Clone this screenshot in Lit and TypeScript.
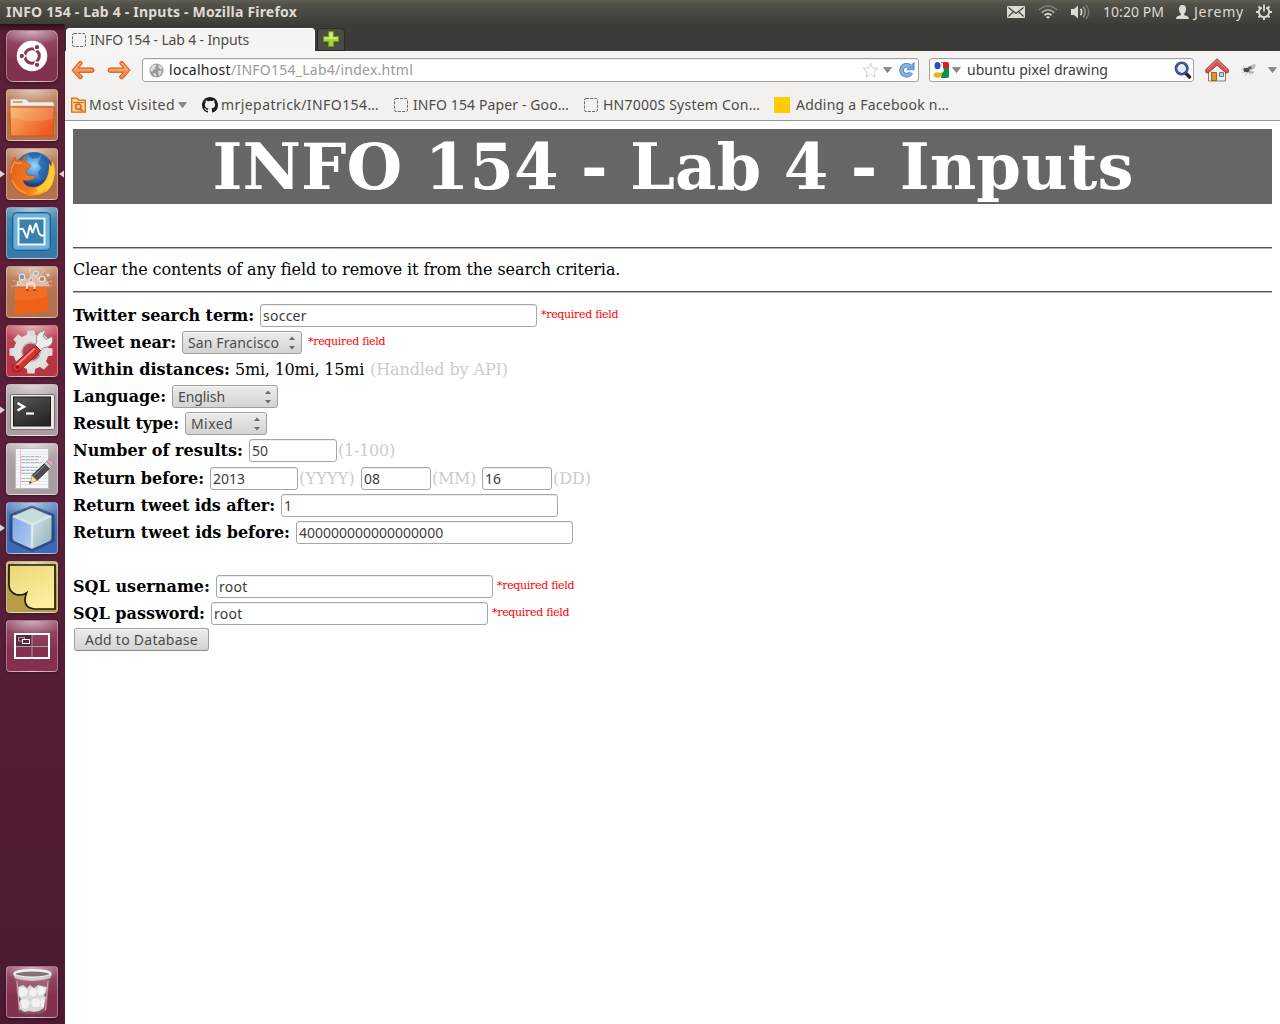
import { LitElement, html, svg, css, nothing } from "lit";
import { customElement } from "lit/decorators.js";

/* A run of text tracked so that it fills the given width in pixels. */
const fit = (text: string, width: number, cls = "") =>
  html`<span class="fit ${cls}" data-w=${width}>${text}</span>`;

const dashed = html`<svg class="ic" width="15" height="15" viewBox="0 0 15 15">
  <rect x=".5" y=".5" width="13" height="13" rx="1.500" fill="none" stroke="#6b6b69" stroke-dasharray="3 1.200"/></svg>`;

const caret = html`<svg class="ic" width="9" height="6" viewBox="0 0 9 6"><path d="M.5.5h8L4.500 5.700z" fill="#8b8a87" stroke="#71706d" stroke-width=".6"/></svg>`;

/* Launcher artwork, each drawn on a 52x52 tile. */
const art: Record<string, unknown> = {
  dash: svg`<circle cx="26" cy="26" r="15.300" fill="#fff"/>
    <circle cx="26" cy="26" r="7.300" fill="none" stroke="#8a3656" stroke-width="3"/>
    <g stroke="#fff" stroke-width="1.400"><path d="M29 20.800l4-6.500M29 31.200l4 6.500M20 26h-8"/></g>
    <g fill="#8a3656" stroke="#fff" stroke-width="1.100"><circle cx="31" cy="17.200" r="2.700"/><circle cx="31" cy="34.800" r="2.700"/><circle cx="15.800" cy="26" r="2.700"/></g>`,
  files: svg`<path d="M4.500 11.500q0-1.500 1.500-1.500h13.500l3.500 3h23q2 0 2 2V45h-43.500z" fill="#f1efee" stroke="#b9a79c" stroke-width=".8"/>
    <path d="M7 12h9.500v2H7z" fill="#f09664"/><path d="M6 16.500h41v2H6z" fill="#c9b5a9"/>
    <path d="M3.700 18h44.600l-1 27.500q0 1.500-1.500 1.500h-39.600q-1.500 0-1.500-1.500z" fill="url(#g-folder)" stroke="#c65422"/>
    <path d="M4.500 19h43l-.5 11Q22 35 5 28z" fill="#fff" opacity=".13"/>`,
  firefox: svg`<circle cx="28" cy="23.500" r="19.500" fill="url(#g-globe)"/>
    <path d="M22 6q8-3 13 0l-3 4-6 1zM36 7l7 6v7l-4 8-5 2-2-6 3-4-3-5 2-4z" fill="#1d5298" opacity=".6"/>
    <path d="M20 7Q17 9 16.500 12.500 13 11.500 11 12.500 9 11 9 9 4 18 3.500 27 5 45 24 48.500 43 48 47.500 33 50 23 46 12q0 5-1 7l-2-4q1 11-4 18-6 7-14 6-7-1-8-7 5 2 10-1 3-2 1-3.500-5 1-7-1-2-3 0-5.500 4-1 4-4-5-1-6-3.500 0-4 1-6.500z" fill="url(#g-fox)" stroke="#c2480f" stroke-width=".5"/>
    <path d="M46 12q0 5-1 7l-2-4q1 11-4 18-3 5-9 7l2 3-5 3q9-1 14-6l-1 4q8-7 8-17l1 2q1-10-3-17z" fill="#fdcf35" opacity=".8"/>
    <path d="M5 25q0-6 4-11 2 2 7 1M6 32q4 10 14 13" fill="none" stroke="#fbb366" stroke-width="1.500" opacity=".6"/>`,
  monitor: svg`<rect x="6.500" y="5.500" width="38" height="38" rx="4" fill="#4a94c4" stroke="#235f8a"/>
    <rect x="8" y="7" width="35" height="35" rx="3" fill="#6eb2dc"/>
    <rect x="12.500" y="11.500" width="26" height="26" fill="#3c81ad" stroke="#eaf6fc" stroke-width="2"/>
    <path d="M13.500 22h3.500l4 9 3-13 2.500 8 3.500-10 3 10.500 2 2h3" fill="none" stroke="#fff" stroke-width="1.900" stroke-linejoin="bevel"/>`,
  store: svg`<g stroke="#fff" stroke-width=".9" opacity=".4"><path d="M25 21L6 14M25 21L11 6M25 21L24 3M25 21L38 5M25 21L46 15M23 20L5 20M28 20L46 20"/></g>
    <path d="M9 20L15 11l7 2 4-6 6 4 7 0 5 9z" fill="#fbdccb" opacity=".6"/>
    <g stroke="#e6e0dc" stroke-width="1.200"><circle cx="16" cy="11" r="2.800" fill="#6f97bd"/><circle cx="30" cy="7.500" r="2.500" fill="#aab0b0"/><circle cx="36" cy="13" r="2.700" fill="#b67f58"/><circle cx="25" cy="14" r="2" fill="#8aa0b0"/><circle cx="13" cy="17" r="1.500" fill="#98b464"/><circle cx="42" cy="9" r="1" fill="#ddd"/></g>
    <path d="M9 22l32-1 1.500 24L9 48.500z" fill="#f0611a"/><path d="M9 22l32-1 .5 9Q24 36 9 34z" fill="#f98638" opacity=".35"/>
    <path d="M21 23v-4q0-1.500 1.500-1.500h4.500q1.500 0 1.500 1.500v4" fill="none" stroke="#fbe2d4" stroke-width="1.800"/>
    <path d="M20 24h3M27 24h3" stroke="#c1440b" stroke-width="1.800"/>`,
  settings: svg`<g transform="translate(25 27)">${[0, 45, 90, 135, 180, 225, 270, 315].map(
      (a) => svg`<path transform="rotate(${a})" d="M-4.500-15l1-6.500h7l1 6.500z" fill="#dddcda"/>`)}
      <circle r="13.500" fill="none" stroke="#e2e1df" stroke-width="8"/><circle r="9" fill="none" stroke="#b5b2b0" stroke-width="1.500"/><circle r="8.300" fill="#b04650"/></g>
    <path d="M31 17q-2-6 3-10l6-2-3 6 3 3.500 6-3q2 6-2.500 9.500-3.500 2-6 1.500L33 28l-6-5z" fill="#efeeec" stroke="#8b8a88" stroke-width=".9"/>
    <path d="M29.500 20.500l5 5L14 45.500q-3.500 2.500-6.500 0-2.500-3 0-6z" fill="#d73032" stroke="#8f161b"/>
    <path d="M28 24L11 40" stroke="#f28b85" stroke-width="1.800" stroke-linecap="round"/><circle cx="11.500" cy="42" r="1.700" fill="#8d1115"/>`,
  terminal: svg`<rect x="4.500" y="10.500" width="44" height="35" rx="1.500" fill="#eceae9" stroke="#77716f"/>
    <rect x="7.500" y="13" width="37" height="29" fill="url(#g-term)" stroke="#1a1a1a"/>
    <path d="M11.500 19l6.500 3.700-6.500 3.800" fill="none" stroke="#fff" stroke-width="2.400"/><path d="M20 29.500h8" stroke="#fff" stroke-width="2.200"/>`,
  editor: svg`<path d="M9.500 5.500h33v40h-33z" fill="#f6f7f8" stroke="#c0bbb8"/>
    <path d="M10 8.500h32M10 11.500h32M10 14.500h32M10 17.500h32M10 20.500h32M10 23.500h32M10 26.500h32M10 29.500h32M10 32.500h32M10 35.500h32M10 38.500h32M10 41.500h32" stroke="#dbe5f0" stroke-width=".8"/>
    <path d="M14.500 6v39" stroke="#f3bcbc"/>
    <path d="M15 13.500h20M15 16.500h17M15 19.500h21M15 24.500h17M15 27.500h19M15 30.500h14M15 35.500h13M15 38.500h11" stroke="#b4b4b4" stroke-dasharray="4 .7"/>
    <path d="M38.500 20.500l5 5L31 37.500l-5-5z" fill="#4c4c4c" stroke="#222" stroke-width=".8"/><path d="M39 22L27.500 33.200" stroke="#929292"/>
    <path d="M26 32.500l5 5-6.500 2.500z" fill="#f2df8a" stroke="#a48f45" stroke-width=".6"/><path d="M24 38l1.500 2-2.500.8z" fill="#111"/>
    <path d="M38.500 20.500l2-2 5 5-2 2z" fill="#cfcfcf" stroke="#777" stroke-width=".5"/><path d="M40.500 18.500q2-2.500 4.500-1.500 3.500 1.500 2.500 4.500l-2 2z" fill="#e7a3c5" stroke="#a8638a" stroke-width=".6"/>`,
  cube: svg`<path d="M26 6L46 14v24L26 47 6 38V14z" fill="#24406f" stroke="#1f3766" stroke-width="5" stroke-linejoin="round" opacity=".6"/>
    <path d="M26 6L45 14 26 22.500 7 14z" fill="#c6dcda"/><path d="M6.500 14L26 22.500V47L8 39q-1.500-1-1.500-3z" fill="url(#g-cubeL)"/><path d="M45.500 14L26 22.500V47l18-8q1.500-1 1.500-3z" fill="url(#g-cube)"/>
    <path d="M7 14L26 22.500 45 14M26 22.500v23" fill="none" stroke="#eaf5f8" stroke-width="2.400" opacity=".7"/>`,
  note: svg`<path d="M3 4h46v44H28q-9-3-9-9.500 0-3 1-5.500H12q-7-1-9-7z" fill="url(#g-note)"/>
    <path d="M3 4h46v44H28q-9-1-9-9 0-3 1.500-7Q16 35 10 33.500 3 31 3 24z" fill="none" stroke="#1b1a12" stroke-width="1.700"/>`,
  spaces: svg`<path d="M9 14h17v12H9z" fill="#5d2741"/><path d="M26 14v24M9 26.500h34" stroke="#9aa59e"/>
    <rect x="9" y="14" width="34" height="24" fill="none" stroke="#fff" stroke-width="2"/>
    <rect x="12.500" y="17.500" width="6" height="3.500" fill="none" stroke="#9aa59e"/><rect x="16.500" y="19.500" width="7" height="4" fill="#5d2741" stroke="#fff"/>`,
  trash: svg`<path d="M9 9h35l-3.500 36q-14 5-28 0z" fill="#c8a9b6" opacity=".3"/>
    <path d="M12 21l5-2 4 3 3-3 4 3 4-3 4 1 5 1-1 5-2 3 2 3-2 4v6l-5 3-5 1-5-1-5 1-4-3-1-6 2-4-3-4 1-4z" fill="#dbd8d8"/>
    <g fill="#f3f2f2"><path d="M13 22l5-1 4 4-2 5-5 1-3-5zM25 22l5 1 1 5-4 3-4-3zM33 20l6 2-1 6-5 2-2-5zM15 34l6-1 3 4-3 6-5-1zM27 33l5-1 3 4-2 5-6 0-2-4zM35 32l4 2-1 7-3 0z"/></g>
    <ellipse cx="26.500" cy="8" rx="18" ry="3.800" fill="#82727a" stroke="#f0efee" stroke-width="2.400"/>
    <path d="M8.500 9v3q18 6 36 0V9q-18 6-36 0z" fill="#cfcccc"/><path d="M11 15l2.500 29M42 15l-2.500 29" stroke="#ddc8d0" opacity=".7"/>
    <path d="M12 44q14 5.500 28 0v2q-14 5-28 0z" fill="#6e5d65"/>`,
};

const apps: { id: string; left?: boolean; right?: boolean }[] = [
  { id: "dash" }, { id: "files" }, { id: "firefox", left: true, right: true }, { id: "monitor" },
  { id: "store" }, { id: "settings" }, { id: "terminal", left: true }, { id: "editor" },
  { id: "cube", left: true }, { id: "note" }, { id: "spaces" }, { id: "trash" },
];

@customElement("app-root")
export class AppRoot extends LitElement {
  static styles = css`
    :host { display: block; width: 1280px; height: 1024px; overflow: hidden; background: #fff; }
    * { box-sizing: border-box; }
    svg { display: block; flex: none; }
    .screen { display: flex; flex-direction: column; width: 1280px; height: 1024px; font: 14px/20px "Noto Sans", sans-serif; color: #4c4c4c; }
    .fit { display: inline-block; white-space: pre; flex: none; }
    .panel { display: flex; align-items: center; height: 24px; flex: none; padding: 0 8px 0 6px; background: linear-gradient(#605f54 0, #504f48 5px, #3f3e39 23px, #3c3b37); color: #dfdbd2; }
    .title { font-weight: 700; margin-right: auto; }
    .env { margin-right: 13px; } .wifi { margin-right: 12px; } .vol { margin-right: 13px; } .clock { margin-right: 12px; } .user { margin-right: 5px; } .name { margin-right: 12px; }
    .work { display: flex; flex: 1; min-height: 0; }
    .launcher { width: 65px; flex: none; display: flex; flex-direction: column; gap: 7px; padding: 6px 0; background: linear-gradient(#2e0f1c 0, #5a1e36 8px, #5b2039 45%, #4b1a30); border-right: 1px solid #4a1b30; }
    .slot { display: flex; align-items: center; height: 52px; flex: none; }
    .slot:last-child { margin-top: auto; }
    .gap { width: 6px; }
    .tile { width: 52px; height: 52px; border-radius: 4px; border: 1px solid rgba(255,255,255,.33); box-shadow: 0 1px 3px rgba(0,0,0,.35); background-image: radial-gradient(ellipse 32px 15px at 50% 0, rgba(255,255,255,.55), transparent), linear-gradient(rgba(255,255,255,.16), transparent 60%); }
    .tile svg { margin: -1px; }
    .tile.dash { border-radius: 7px; }
    .dash, .spaces, .trash { background-color: #84304f; }
    .files, .store, .firefox { background-color: #b4714c; }
    .monitor { background-color: #3779a8; } .settings { background-color: #b83544; }
    .terminal, .editor { background-color: #a99da1; }
    .cube { background-color: #3f6ab1; } .note { background-color: #b69d46; }
    .browser { flex: 1; display: flex; flex-direction: column; min-width: 0; }
    .tabs { height: 27px; display: flex; align-items: flex-end; gap: 2px; padding-left: 1px; background: #3c3b37; flex: none; }
    .tab { width: 249px; height: 23px; border-radius: 4px 4px 0 0; background: #f5f4f2; border: 1px solid #fff; border-bottom: 0; display: flex; align-items: center; gap: 3px; padding-left: 5px; }
    .plus { width: 28px; height: 23px; border-radius: 4px 4px 0 0; border: 1px solid #2c2b28; background: #4b4a45; display: flex; align-items: center; justify-content: center; padding-bottom: 2px; }
    .nav { height: 39px; display: flex; align-items: center; background: linear-gradient(#f6f5f4, #f2f1f0 34px); padding: 0 0 1px 6px; flex: none; }
    .back { margin-right: 12px; } .fwd { margin-right: 11px; }
    .field { height: 24px; border: 1px solid #a3a19e; border-radius: 3px; background: #fff; display: flex; align-items: center; box-shadow: inset 0 1px #eeedec; }
    .url { width: 777px; padding: 0 3px 0 6px; margin-right: 10px; }
    .url .globe { margin-right: 5px; } .host { color: #222; } .path { color: #9b9a98; margin-right: auto; }
    .star { margin-right: 4px; } .reload { margin-left: 6px; }
    .search { width: 265px; padding: 0 1px 0 3px; margin-right: 11px; color: #3c3c3c; }
    .search .fit { margin: 0 auto 0 6px; } .search .goog { margin-right: 3px; }
    .home { margin-right: 12px; } .fly { margin-right: 11px; }
    .marks { height: 31px; display: flex; align-items: center; background: #f2f1f0; border-bottom: 1px solid #979694; padding-left: 6px; flex: none; }
    .mark { display: flex; align-items: center; margin-right: 15px; }
    .m1 .fit { margin: 0 3px; } .m2 .fit { margin-left: 3px; } .m3 .fit { margin-left: 4px; } .m4 .fit { margin-left: 4px; } .m5 .fit { margin-left: 6px; }
    .m4 { margin-right: 14px; }
    .yellow { width: 16px; height: 16px; background: #ffcb05; }
    .page { flex: 1; background: #fff; padding: 8px; color: #000; font: 16px/19px "DejaVu Serif", serif; }
    .banner { height: 75px; background: #666; color: #fff; text-align: center; margin: 0 0 43px; font-size: 64px; line-height: 75px; font-weight: 700; padding-left: 1px; }
    .rule { height: 2px; border-top: 1px solid #545452; border-bottom: 1px solid #b5b4b2; }
    .hint { height: 42px; line-height: 41px; }
    .form { padding-top: 9px; }
    .row { height: 27px; padding-top: 2px; display: flex; line-height: 23px; }
    .tall { height: 28px; }
    .label { font-weight: 700; margin-right: 6px; }
    .grey { color: #ccc; margin-left: 1px; }
    .near { margin-left: -1px; }
    .date { margin-right: 6px; }
    .req { color: #f00; font-size: 11px; line-height: 22px; margin-left: 4px; }
    .after { margin-left: 6px; }
    .input { height: 23px; border: 1px solid #a9a7a3; border-radius: 3px; background: #fff; padding: 0 2px; margin: 0; outline: 0; font: 14px/21px "Noto Sans", sans-serif; color: #3c3c3c; box-shadow: inset 0 1px #eeedeb; }
    .word { letter-spacing: .25px; }
    .long { width: 277px; } .mid { width: 88px; } .short { width: 70px; }
    .select, .submit { height: 23px; border: 1px solid #a09f9c; border-radius: 3px; background: linear-gradient(#ececec, #d3d3d2); font: 14px/21px "Noto Sans", sans-serif; color: #4c4c4c; display: flex; justify-content: space-between; box-shadow: inset 0 1px #f7f7f7; }
    .select { padding: 0 5px; align-items: center; }
    .submit { width: 135px; margin: -1px 0 0 1px; padding: 0; justify-content: center; border-bottom-color: #8b8a87; }
    .city { width: 120px; } .lang { width: 106px; } .kind { width: 82px; }
  `;

  firstUpdated() {
    this.renderRoot.querySelectorAll<HTMLElement>(".fit").forEach((el) => {
      const target = Number(el.dataset.w);
      const count = el.textContent!.length;
      el.style.letterSpacing = `${(target - el.getBoundingClientRect().width) / count}px`;
      el.style.width = `${target}px`;
    });
  }

  private tile(a: { id: string; left?: boolean; right?: boolean }) {
    return html`<div class="slot">
      <svg class="gap" width="6" height="12" viewBox="0 0 6 12">${a.left ? svg`<path d="M0 2.500l5 3.500-5 3.500z" fill="#dcd3d6"/>` : nothing}</svg>
      <div class="tile ${a.id}"><svg width="52" height="52" viewBox="0 0 52 52">
        <defs>
          <linearGradient id="g-folder" x2="1" y2=".6"><stop stop-color="#f8b565"/><stop offset="1" stop-color="#ee5a24"/></linearGradient>
          <radialGradient id="g-globe" cy=".35"><stop stop-color="#9ad8f6"/><stop offset=".6" stop-color="#3e86c8"/><stop offset="1" stop-color="#183f83"/></radialGradient>
          <linearGradient id="g-fox" x2="1" y2=".3"><stop stop-color="#e0601c"/><stop offset=".6" stop-color="#ef7a1e"/><stop offset="1" stop-color="#fcc32e"/></linearGradient>
          <linearGradient id="g-term" x2=".6" y2="1"><stop stop-color="#585854"/><stop offset="1" stop-color="#262624"/></linearGradient>
          <linearGradient id="g-cube" x2="1" y2="1"><stop stop-color="#d4e3ea"/><stop offset="1" stop-color="#8fb0b9"/></linearGradient>
          <linearGradient id="g-cubeL" x2="1" y2="1"><stop stop-color="#7ea4e4"/><stop offset="1" stop-color="#b4cff2"/></linearGradient>
          <linearGradient id="g-note" x2=".6" y2="1"><stop stop-color="#ebd775"/><stop offset="1" stop-color="#fbef9e"/></linearGradient>
        </defs>${art[a.id]}</svg></div>
      ${a.right ? html`<svg width="6" height="12" viewBox="0 0 6 12"><path d="M6 2.500L1 6l5 3.500z" fill="#dcd3d6"/></svg>` : nothing}
    </div>`;
  }

  private select(text: string, w: number, cls: string) {
    return html`<div class="select ${cls}">${fit(text, w)}
      <svg width="8" height="15" viewBox="0 0 8 15"><path d="M1 5L4 1.500 7 5zM1 11L4 14.500 7 11z" fill="#6b6b69"/></svg></div>`;
  }

  render() {
    return html`<div class="screen">
      <div class="panel">
        ${fit("INFO 154 - Lab 4 - Inputs - Mozilla Firefox", 291, "title")}
        <svg class="env" width="18" height="12" viewBox="0 0 18 12"><rect width="18" height="12" rx="1" fill="#dfdbd2"/><path d="M1.500 1.500L9 7.500l7.500-6M1.500 10.500l5-5M16.500 10.500l-5-5" fill="none" stroke="#44433e" stroke-width="1.200"/></svg>
        <svg class="wifi" width="20" height="14" viewBox="0 0 20 14" fill="none"><path d="M.8 5Q10-3 19.200 5" stroke="#85827a" stroke-width="1.600"/><path d="M3.700 7.600Q10 2.200 16.300 7.600" stroke="#b0ada5" stroke-width="1.700"/><path d="M6.600 10.200Q10 7.400 13.400 10.200" stroke="#dfdbd2" stroke-width="1.800"/><path d="M10 13.800L7.800 11.900q2.200-1.500 4.400 0z" fill="#dfdbd2"/></svg>
        <svg class="vol" width="20" height="16" viewBox="0 0 20 16" fill="none"><path d="M1 5h3l4-3.500v13L4 11H1z" fill="#dfdbd2"/><path d="M10.500 4.800q2.400 3.200 0 6.400" stroke="#dfdbd2" stroke-width="1.700"/><path d="M13.200 2.800q4 5.200 0 10.400" stroke="#99968d" stroke-width="1.500"/><path d="M16 1q5.500 7 0 14" stroke="#77746d" stroke-width="1.500"/></svg>
        ${fit("10:20 PM", 61, "clock")}
        <svg class="user" width="13" height="14" viewBox="0 0 13 14"><path d="M3 4q0-4 3.500-4T10 4q0 3.500-1.800 4.800v1.400Q13 11 13 14H0q0-3 4.800-3.800V8.800Q3 7.500 3 4z" fill="#dfdbd2"/></svg>
        ${fit("Jeremy", 50, "name")}
        <svg width="16" height="16" viewBox="0 0 16 16" fill="none" stroke="#dfdbd2"><path d="M5.800 3.300a5.200 5.200 0 1 0 4.400 0" stroke-width="2"/><path d="M8 .5v7" stroke-width="1.800"/><path d="M2.500 2.500l2 2M13.500 2.500l-2 2M0 8h3M13 8h3M2.500 13.500l2-2M13.500 13.500l-2-2M8 13v3" stroke-width="1.900"/></svg>
      </div>
      <div class="work">
        <div class="launcher">${apps.map((a) => this.tile(a))}</div>
        <div class="browser">
          <div class="tabs">
            <div class="tab">${dashed}${fit("INFO 154 - Lab 4 - Inputs", 159)}</div>
            <div class="plus"><svg width="16" height="16" viewBox="0 0 16 16"><path d="M5.500.5h5v5h5v5h-5v5h-5v-5h-5v-5h5z" fill="#a9d13a" stroke="#6b9a1c"/><path d="M6.500 1.500h3v5h5v1.500H1.500V6.500h5z" fill="#d5ec83"/></svg></div>
          </div>
          <div class="nav">
            <svg class="back" width="24" height="20" viewBox="0 0 24 20"><path d="M10.300 1.500q1.500 1 .5 2.800L7.500 8H21q2 0 2 2.200t-2 2.100H7.500l3.500 3.500q1 1.600-.5 2.700-1.200.9-2.500 0L1 10.200 8 2q1-1.200 2.300-.5z" fill="#f18d4c" stroke="#cf5420"/><path d="M9.500 3L3.500 9.800H21" fill="none" stroke="#f9b384"/></svg>
            <svg class="fwd" width="24" height="20" viewBox="0 0 24 20"><path d="M13.700 1.500q-1.500 1-.5 2.800L16.500 8H3q-2 0-2 2.200t2 2.100h13.500L13 15.800q-1 1.600.5 2.700 1.200.9 2.500 0l7-8.300L16 2q-1-1.200-2.300-.5z" fill="#f18d4c" stroke="#cf5420"/><path d="M14.500 3l6 6.800H3" fill="none" stroke="#f9b384"/></svg>
            <div class="field url">
              <svg class="globe" width="15" height="15" viewBox="0 0 15 15"><circle cx="7.500" cy="7.500" r="7" fill="#999"/><path d="M3 2.500l3-1 1.500 1L6 4.500l1 1.500-2.500.5L3 9 1 7.500zM9 1.500l3 1.500 1.500 3-2 .5L10 5zM9 8l3.500-.5L13 9l-2.500 4-1-2zM4 10l3 .5.500 3-2-.5z" fill="#dedede"/></svg>
              ${fit("localhost", 62, "host")}${fit("/INFO154_Lab4/index.html", 182, "path")}
              <svg class="star" width="17" height="16" viewBox="0 0 17 16"><path d="M8.500 1l2.100 5 5.400.3-4.200 3.500 1.400 5.400-4.700-3-4.700 3 1.400-5.400L1 6.300 6.400 6z" fill="#fff" stroke="#cfcecc"/></svg>
              ${caret}
              <svg class="reload" width="17" height="16" viewBox="0 0 17 16"><path d="M11.500 4.200A5 5 0 1 0 13 10.500" fill="none" stroke="#4a82bb" stroke-width="4.600"/><path d="M16 .5v7.300H8.700z" fill="#76aadb" stroke="#4a82bb" stroke-width=".9"/><path d="M11.800 4.500A5 5 0 1 0 12.900 10.700" fill="none" stroke="#84b3df" stroke-width="2.900"/></svg>
            </div>
            <div class="field search">
              <svg class="goog" width="16" height="16" viewBox="0 0 16 16"><path d="M8 0h6q2 0 2 2v4H9z" fill="#e01b24"/><path d="M9 6h7v8q0 2-2 2H8z" fill="#109246"/><path d="M0 8h6v8H2q-2 0-2-2z" fill="#fff"/><ellipse cx="4.500" cy="3.700" rx="3" ry="3.600" fill="#1d56c0"/><ellipse cx="4.500" cy="13" rx="4" ry="2.800" fill="#f2b01e"/><path d="M6 7.500q4-2 2-6.500l2-.5v5Q12 9 9 11z" fill="#fff"/></svg>
              ${caret}${fit("ubuntu pixel drawing", 141)}
              <svg width="18" height="18" viewBox="0 0 18 18"><path d="M11.500 12l4 4" stroke="#262626" stroke-width="3.400" stroke-linecap="round"/><circle cx="7.700" cy="7.500" r="5.700" fill="#e5e9f7" stroke="#26387f" stroke-width="2.600"/><circle cx="7.700" cy="7.500" r="5.700" fill="none" stroke="#5670bd"/><path d="M5 7q.5-2.500 3-2.500" fill="none" stroke="#fff" stroke-width="1.500"/></svg>
            </div>
            <svg class="home" width="24" height="24" viewBox="0 0 24 24"><path d="M3.500 12L12 4l8.500 8v11h-17z" fill="#efefed" stroke="#7f7f7b"/><path d="M6.500 14.500h5v8h-5z" fill="#d9952b" stroke="#9a6412"/><path d="M14.500 14.500h4v4h-4z" fill="#b4cfe8" stroke="#77777a"/><path d="M12 .8l11.300 10.700v3l-2 .6L12 7.300 3 15.100l-2.200-.6v-3z" fill="#d5545a" stroke="#9c2a30" stroke-width=".8"/><path d="M12 2.300L2.500 11.500M12 2.300l9.500 9.200" stroke="#e88487" fill="none"/></svg>
            <svg class="fly" width="16" height="16" viewBox="0 0 16 16"><path d="M6.500 5L13 2l2 1-2 4-6 2zM8 9l6 .500-2 2-5-.5z" fill="#b9b9b7"/><path d="M0 7h4M1 11l4-2M4 14l3-4M9 13l0-4M2 4l3 3M12 12l-3-3" stroke="#a5a5a3" stroke-width=".7"/><ellipse cx="5.500" cy="8" rx="3" ry="2.200" fill="#4a4a48"/><circle cx="9" cy="5.800" r="1.600" fill="#5b5b59"/></svg>
            ${caret}
          </div>
          <div class="marks">
            <div class="mark m1"><svg width="15" height="16" viewBox="0 0 15 16"><path d="M.7 1.200h5.300l1.500 2h6.800v12H.7z" fill="#f8cfa3" stroke="#d0700f" stroke-width="1.300"/><path d="M2 5.500h11" stroke="#d0700f"/><circle cx="7.300" cy="9.800" r="2.700" fill="#f6c08b" stroke="#d0700f" stroke-width="1.500"/><path d="M9 11.500l3 3" stroke="#d0700f" stroke-width="1.800"/></svg>${fit("Most Visited", 86)}${caret}</div>
            <div class="mark m2"><svg width="16" height="16" viewBox="0 0 16 16"><path d="M8 0C3.580 0 0 3.580 0 8c0 3.540 2.290 6.530 5.470 7.590.4.070.55-.17.55-.38 0-.19-.010-.82-.010-1.490-2.010.37-2.530-.49-2.690-.94-.09-.23-.48-.94-.82-1.130-.28-.15-.68-.52-.010-.53.63-.010 1.080.58 1.230.82.72 1.210 1.870.87 2.330.66.070-.52.28-.87.510-1.070-1.780-.2-3.640-.89-3.640-3.950 0-.87.310-1.590.82-2.150-.08-.2-.36-1.020.08-2.120 0 0 .67-.21 2.200.82a7.600 7.600 0 0 1 4 0c1.530-1.040 2.200-.82 2.200-.82.44 1.100.16 1.920.08 2.120.51.56.82 1.270.82 2.150 0 3.070-1.870 3.750-3.650 3.950.29.25.54.73.54 1.480 0 1.070-.010 1.930-.010 2.200 0 .21.15.46.55.38A8 8 0 0 0 16 8c0-4.420-3.580-8-8-8z" fill="#1b1b1b"/></svg>${fit("mrjepatrick/INFO154…", 158)}</div>
            <div class="mark m3">${dashed}${fit("INFO 154 Paper - Goo…", 156)}</div>
            <div class="mark m4">${dashed}${fit("HN7000S System Con…", 157)}</div>
            <div class="mark m5"><div class="yellow"></div>${fit("Adding a Facebook n…", 153)}</div>
          </div>
          <div class="page">
            <h1 class="banner">${fit("INFO 154 - Lab 4 - Inputs", 921)}</h1>
            <div class="rule"></div>
            <div class="hint">${fit("Clear the contents of any field to remove it from the search criteria.", 547)}</div>
            <div class="rule"></div>
            <div class="form">
              <div class="row">${fit("Twitter search term:", 181, "label")}<input class="input long word" value="soccer">${fit("*required field", 77, "req")}</div>
              <div class="row">${fit("Tweet near:", 103, "label")}${this.select("San Francisco", 91, "city")}${fit("*required field", 77, "req after")}</div>
              <div class="row">${fit("Within distances:", 157, "label")}${fit("5mi, 10mi, 15mi ", 134, "near")}${fit("(Handled by API)", 138, "grey")}</div>
              <div class="row">${fit("Language:", 93, "label")}${this.select("English", 47, "lang")}</div>
              <div class="row">${fit("Result type:", 106, "label")}${this.select("Mixed", 42, "kind")}</div>
              <div class="row tall">${fit("Number of results:", 170, "label")}<input class="input mid" value="50">${fit("(1-100)", 57, "grey")}</div>
              <div class="row">${fit("Return before:", 131, "label")}<input class="input mid" value="2013">${fit("(YYYY)", 56, "grey date")}<input class="input short" value="08">${fit("(MM)", 44, "grey date")}<input class="input short" value="16">${fit("(DD)", 38, "grey")}</div>
              <div class="row">${fit("Return tweet ids after:", 202, "label")}<input class="input long" value="1"></div>
              <div class="row">${fit("Return tweet ids before:", 217, "label")}<input class="input long" value="400000000000000000"></div>
              <div class="row"></div>
              <div class="row">${fit("SQL username:", 137, "label")}<input class="input long word" value="root">${fit("*required field", 77, "req")}</div>
              <div class="row">${fit("SQL password:", 132, "label")}<input class="input long word" value="root">${fit("*required field", 77, "req")}</div>
              <div class="row"><button class="submit">${fit("Add to Database", 113)}</button></div>
            </div>
          </div>
        </div>
      </div>
    </div>`;
  }
}
